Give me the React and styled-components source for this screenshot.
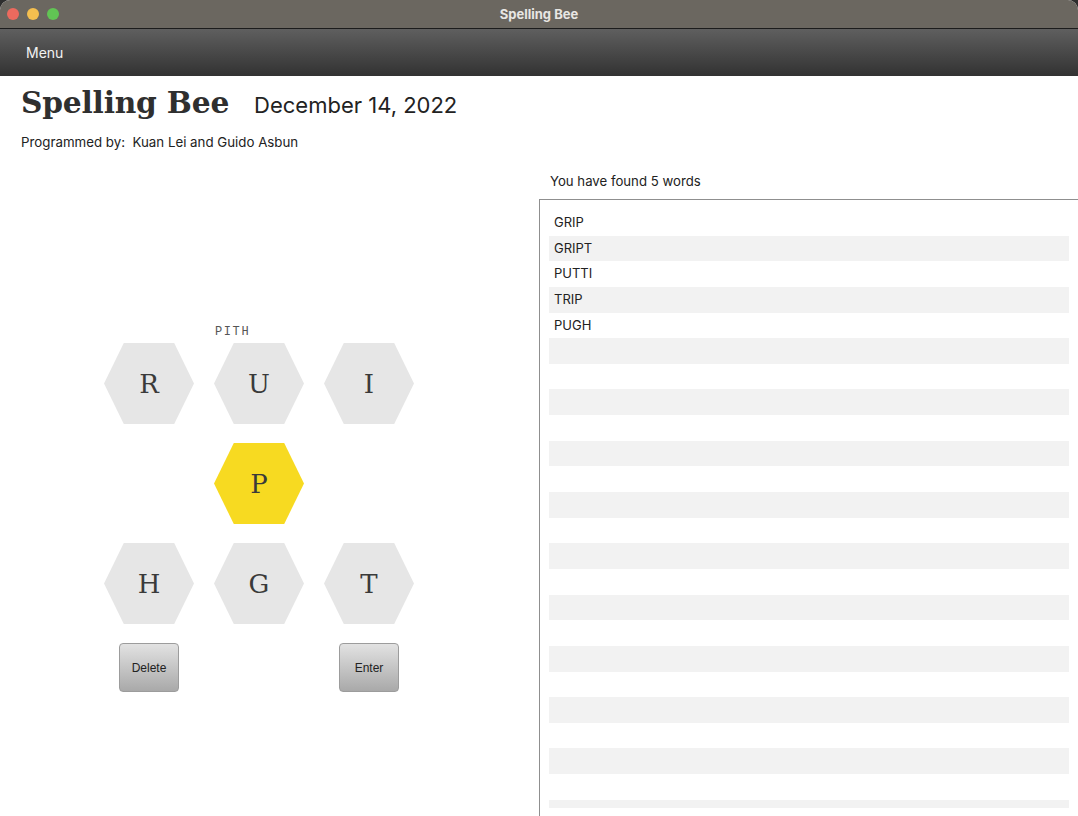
import React from 'react'
import styled, { createGlobalStyle } from 'styled-components'

const GlobalStyle = createGlobalStyle`
  html, body {
    margin: 0;
    padding: 0;
    background: #2e2e2e;
    overflow: hidden;
  }
  * { box-sizing: border-box; }
`

const letters = [
  ['R', 'U', 'I'],
  [null, 'P', null],
  ['H', 'G', 'T'],
]

const words = ['GRIP', 'GRIPT', 'PUTTI', 'TRIP', 'PUGH']
const rowCount = 24

const App = () => (
  <Window>
    <GlobalStyle />
    <TitleBar>
      <Lights>
        <Light color="#ec6a5e" />
        <Light color="#f4bf4f" />
        <Light color="#61c554" />
      </Lights>
      <WindowTitle>Spelling Bee</WindowTitle>
    </TitleBar>
    <MenuBar>
      <MenuItem>Menu</MenuItem>
    </MenuBar>

    <Header>
      <TitleRow>
        <Title>Spelling Bee</Title>
        <DateText>December 14, 2022</DateText>
      </TitleRow>
      <Credits>Programmed by:&nbsp; Kuan Lei and Guido Asbun</Credits>
    </Header>

    <Main>
      <LeftPanel>
        <Board>
          <Guess>PITH</Guess>
          <HexGrid>
            {letters.flat().map((l, i) =>
              l ? (
                <Hex key={i} center={l === 'P'}>
                  {l}
                </Hex>
              ) : (
                <span key={i} />
              )
            )}
          </HexGrid>
          <ButtonRow>
            <Button>Delete</Button>
            <span />
            <Button>Enter</Button>
          </ButtonRow>
        </Board>
      </LeftPanel>

      <RightPanel>
        <FoundLabel>You have found {words.length} words</FoundLabel>
        <ListBox>
          <ListInner>
            {Array.from({ length: rowCount }).map((_, i) => (
              <WordRow key={i} odd={i % 2 === 1}>
                {words[i] || ''}
              </WordRow>
            ))}
          </ListInner>
        </ListBox>
      </RightPanel>
    </Main>
  </Window>
)

const Window = styled.div`
  width: 1078px;
  height: 816px;
  display: flex;
  flex-direction: column;
  background: #ffffff;
  border-radius: 10px 10px 0 0;
  overflow: hidden;
  font-family: Inter, 'Noto Sans', sans-serif;
  color: #222;
`
const TitleBar = styled.div`
  position: relative;
  height: 29px;
  flex: none;
  background: #6b6760;
  border-bottom: 1px solid #1c1c1c;
  display: flex;
  align-items: center;
  justify-content: center;
`
const Lights = styled.div`
  position: absolute;
  left: 7px;
  top: 8px;
  display: flex;
  gap: 8px;
`
const Light = styled.div`
  width: 12px;
  height: 12px;
  border-radius: 50%;
  background: ${props => props.color};
`
const WindowTitle = styled.div`
  font-family: Inter, 'Noto Sans', sans-serif;
  font-weight: 700;
  font-size: 13px;
  color: #e8e6e3;
`
const MenuBar = styled.div`
  height: 47px;
  flex: none;
  background: linear-gradient(#5f5f5f, #323232);
  display: flex;
  align-items: center;
  padding-left: 26px;
`
const MenuItem = styled.div`
  font-size: 14px;
  color: #f2f2f2;
`
const Header = styled.div`
  padding: 9px 21px 0;
  flex: none;
`
const TitleRow = styled.div`
  display: flex;
  align-items: baseline;
  gap: 25px;
  height: 44px;
`
const Title = styled.h1`
  margin: 0;
  font-family: 'DejaVu Serif', serif;
  font-weight: 700;
  font-size: 29.7px;
  letter-spacing: -0.2px;
  color: #2f2f2f;
`
const DateText = styled.div`
  font-size: 22px;
  color: #222;
`
const Credits = styled.div`
  margin-top: 4px;
  font-size: 13.3px;
  line-height: 18px;
  color: #222;
`
const Main = styled.div`
  flex: 1;
  display: flex;
  min-height: 0;
  margin-top: 14px;
`
const LeftPanel = styled.div`
  width: 539px;
  flex: none;
  padding: 157px 0 0 104px;
`
const Board = styled.div`
  width: 310px;
  display: flex;
  flex-direction: column;
`
const Guess = styled.div`
  padding: 3px 0 0 111px;
  height: 21px;
  line-height: 14px;
  font-family: 'Liberation Mono', monospace;
  font-size: 12px;
  letter-spacing: 1.6px;
  color: #555;
`
const HexGrid = styled.div`
  display: grid;
  grid-template-columns: repeat(3, 90px);
  grid-auto-rows: 81px;
  column-gap: 20px;
  row-gap: 19px;
`
const Hex = styled.div`
  display: flex;
  align-items: center;
  justify-content: center;
  clip-path: polygon(22% 0, 78% 0, 100% 50%, 78% 100%, 22% 100%, 0 50%);
  background: ${props => (props.center ? '#f7da21' : '#e6e6e6')};
  font-family: 'DejaVu Serif', serif;
  font-size: 26px;
  color: #3a3a3a;
`
const ButtonRow = styled.div`
  display: grid;
  grid-template-columns: repeat(3, 90px);
  column-gap: 20px;
  margin-top: 19px;
  justify-items: center;
`
const Button = styled.button`
  width: 60px;
  height: 49px;
  border: 1px solid #9c9c9c;
  border-radius: 4px;
  background: linear-gradient(#e2e2e2, #a9a9a9);
  font-family: 'Liberation Sans', Arial, sans-serif;
  font-size: 12px;
  color: #222;
  padding: 0;
`
const RightPanel = styled.div`
  flex: 1;
  display: flex;
  flex-direction: column;
  min-width: 0;
`
const FoundLabel = styled.div`
  padding: 7px 0 0 11px;
  height: 34px;
  font-size: 13.2px;
  line-height: 18px;
  color: #222;
`
const ListBox = styled.div`
  flex: 1;
  min-height: 0;
  border: 1px solid #8f8f8f;
  border-right: none;
  border-bottom: none;
  padding: 10px 9px 8px 9px;
  display: flex;
  flex-direction: column;
`
const ListInner = styled.div`
  flex: 1;
  overflow: hidden;
`
const WordRow = styled.div`
  height: 25.65px;
  line-height: 25.65px;
  padding-left: 5px;
  font-size: 13px;
  color: #222;
  background: ${props => (props.odd ? '#f2f2f2' : '#ffffff')};
`

export default App
